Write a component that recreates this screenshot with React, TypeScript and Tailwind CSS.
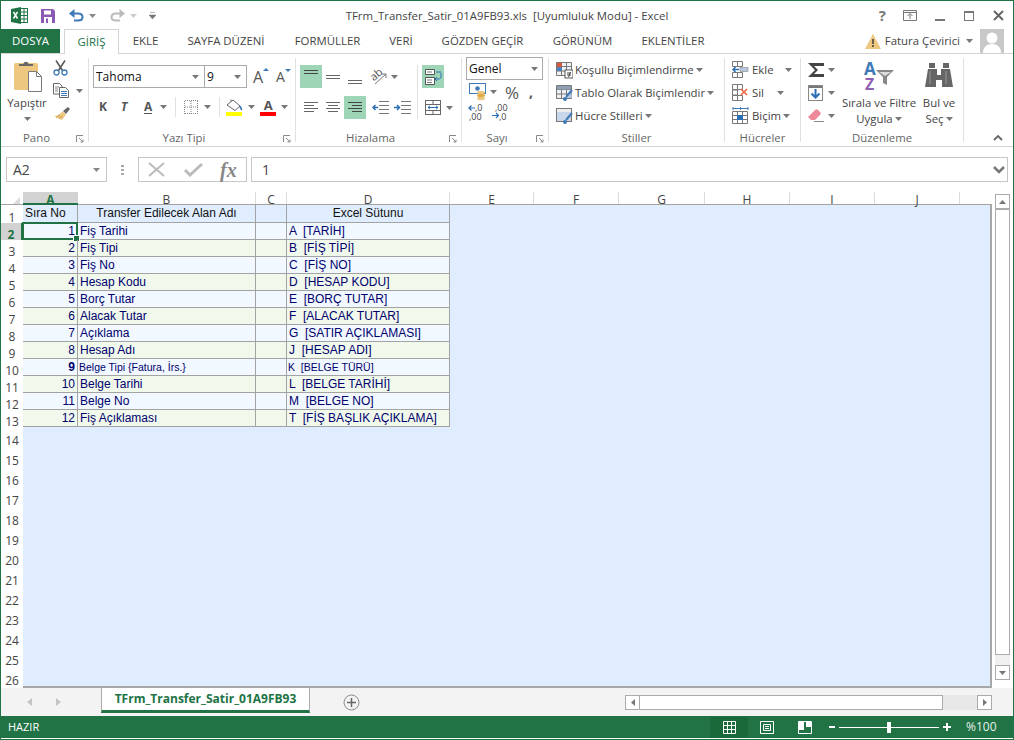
import React from "react";

const Caret = ({ c = "#777", className = "" }: { c?: string; className?: string }) => (
  <svg width="7" height="4" viewBox="0 0 7 4" className={className}><path d="M0 0h7L3.5 4z" fill={c} /></svg>
);

const Launcher = () => (
  <svg width="8" height="8" viewBox="0 0 8 8"><path d="M.5 7V.5H7M3 3l4 4M7 4.5V7H4.5" fill="none" stroke="#8a8a8a" /></svg>
);

function Group({ w, label, launcher, children, sep = true }: { w: string; label: string; launcher?: boolean; children: React.ReactNode; sep?: boolean }) {
  return (
    <div className="flex h-full shrink-0">
      <div className={`${w} h-full flex flex-col`}>
        <div className="h-[77px] shrink-0">{children}</div>
        <div className={`h-[15px] grid ${launcher ? "grid-cols-[1fr_16px]" : "grid-cols-[1fr]"} items-start text-[11.4px] leading-[14px] text-[#666]`}>
          <span className="text-center">{label}</span>
          {launcher && <span className="flex justify-end pr-[4px] pt-[4px]"><Launcher /></span>}
        </div>
      </div>
      {sep && <div className="w-px h-[84px] mt-[4px] bg-[#e1e1e1]" />}
    </div>
  );
}

const Lines = ({ rows, hl }: { rows: [number, number, number][]; hl?: boolean }) => (
  <svg width="16" height="16" viewBox="0 0 16 16">
    {rows.map(([x, w, y], i) => <rect key={i} x={x} y={y} width={w} height="1" fill={hl ? "#444" : "#666"} />)}
  </svg>
);

const Cell = ({ children, hl, w = "w-[22px]" }: { children: React.ReactNode; hl?: boolean; w?: string }) => (
  <div className={`${w} h-[23px] flex items-center justify-center ${hl ? "bg-[#9fd5b7]" : ""}`}>{children}</div>
);

const Paste = () => (
  <svg width="29" height="33" viewBox="0 0 29 33">
    <rect x="0" y="3" width="24" height="27" rx="1.5" fill="#edc77f" />
    <path d="M5 6V4h4.5c0-3 5-3 5 0H19v2z" fill="#666" />
    <path d="M14.500 11.500h8l5 5v15h-13z" fill="#fff" stroke="#7a7a7a" />
    <path d="M22.500 11.500v5h5" fill="none" stroke="#7a7a7a" />
  </svg>
);

const Scissors = () => (
  <svg width="15" height="16" viewBox="0 0 15 16">
    <path d="M3 .5l6.500 10M12 .5L5.500 10.500" stroke="#555" strokeWidth="1.500" fill="none" />
    <circle cx="3.500" cy="12.500" r="2.500" fill="none" stroke="#3e7ab8" strokeWidth="1.300" />
    <circle cx="11.500" cy="12.500" r="2.500" fill="none" stroke="#3e7ab8" strokeWidth="1.300" />
  </svg>
);

const Copy = () => (
  <svg width="16" height="15" viewBox="0 0 16 15">
    <path d="M.5.500h6l2.500 2.500v8H.5z" fill="#fff" stroke="#666" />
    <path d="M6.500 4.500h6l3 3v7h-9z" fill="#fff" stroke="#666" />
    <path d="M2 4h4M2 6h3M2 8h3" stroke="#888" />
    <path d="M8 8.500h6M8 10.500h6M8 12.500h6" stroke="#3e7ab8" />
  </svg>
);

const Brush = () => (
  <svg width="17" height="15" viewBox="0 0 17 15">
    <path d="M10 5l5-4 2 2-4 5z" fill="#666" />
    <path d="M9.500 5.500l3.500 3L9 14 1 10c3 0 5-1 8.500-4.500z" fill="#edc77f" />
    <path d="M3 11.500l4-2.500M6 13l3-3" stroke="#c99a4b" />
  </svg>
);

const BigA = ({ size = 16 }: { size?: number }) => (
  <span className="leading-none text-[#555]" style={{ fontSize: size }}>A</span>
);

const Borders = () => (
  <svg width="14" height="14" viewBox="0 0 14 14">
    <path d="M.5 1v13M13.500 1v13M1 .5h13M1 13.500h13M7 1v13M1 7h13" stroke="#888" strokeDasharray="1 1" fill="none" />
  </svg>
);

const FillBucket = () => (
  <svg width="17" height="18" viewBox="0 0 17 18">
    <path d="M1 7l6-5 7 6-5 4.500z" fill="#fff" stroke="#666" />
    <path d="M5 3.500V1.500" stroke="#666" />
    <path d="M14 8c1.500 1.500 2 3 1.500 4-1-.5-1.500-2-1.500-4z" fill="#3e7ab8" stroke="#3e7ab8" />
    <rect x="0" y="14" width="16" height="4" fill="#ffff00" />
  </svg>
);

const Orient = () => (
  <svg width="17" height="17" viewBox="0 0 17 17" className="overflow-visible">
    <text x="0" y="10" fontSize="11" fill="#555" transform="rotate(-40 6 8)" fontFamily="'Open Sans',sans-serif">ab</text>
    <path d="M4 16L15 6M15 6h-4M15 6v4" stroke="#777" fill="none" />
  </svg>
);

const Indent = ({ rev }: { rev?: boolean }) => (
  <svg width="17" height="13" viewBox="0 0 17 13">
    <path d="M7 .5h10M7 4.500h10M7 8.500h10M7 12.500h10" stroke="#777" />
    {rev ? <path d="M1 6.500h5M3.500 4L1 6.500 3.500 9" stroke="#2a6fb4" strokeWidth="1.500" fill="none" /> : <path d="M0 6.500h5M3 4l2.500 2.500L3 9" stroke="#2a6fb4" strokeWidth="1.500" fill="none" />}
  </svg>
);

const Wrap = () => (
  <svg width="17" height="16" viewBox="0 0 17 16">
    <path d="M.5.500h9v5h-9zM.5 8.500h9v7h-9z" fill="#fff" stroke="#555" />
    <path d="M2 3h5M2 11h5M2 13.500h5" stroke="#777" />
    <path d="M11 3h5M16 4v4c0 1.500-1 2-3 2h-3M12 8l-2 2 2 2" stroke="#2a6fb4" fill="none" />
  </svg>
);

const Merge = () => (
  <svg width="16" height="15" viewBox="0 0 16 15">
    <rect x=".5" y=".5" width="15" height="14" fill="#fff" stroke="#666" />
    <path d="M.5 4.500h15M.5 10.500h15M8 .5v4M8 10.500v4" stroke="#666" />
    <path d="M3 7.500h10M5 5.800L3 7.500l2 1.700M11 5.800l2 1.700-2 1.700" stroke="#2a6fb4" fill="none" />
  </svg>
);

const Accounting = () => (
  <svg width="18" height="18" viewBox="0 0 18 18">
    <rect x=".5" y=".5" width="16" height="10" fill="#fff" stroke="#3e7ab8" />
    <circle cx="8.500" cy="5.500" r="2.300" fill="#3e7ab8" />
    <ellipse cx="12" cy="9.500" rx="4" ry="1.700" fill="#edc77f" />
    <ellipse cx="12" cy="12.500" rx="4" ry="1.700" fill="#e0a840" />
    <ellipse cx="12" cy="15.500" rx="4" ry="1.700" fill="#edc77f" />
  </svg>
);

const Dec = ({ more }: { more?: boolean }) => (
  <svg width="16" height="16" viewBox="0 0 16 16" className="overflow-visible">
    <text x={more ? 3 : 6} y="7" fontSize="9" fill="#444" fontFamily="'Open Sans',sans-serif">{more ? ",00" : ",0"}</text>
    <text x={more ? 7 : 0} y="15.500" fontSize="9" fill="#444" fontFamily="'Open Sans',sans-serif">{more ? ",0" : ",00"}</text>
    {more ? <path d="M0 11.500h6M4 9l2.500 2.500L4 14" stroke="#2a6fb4" strokeWidth="1.200" fill="none" /> : <path d="M0 4h6M2.500 1.500L0 4l2.500 2.500" stroke="#2a6fb4" strokeWidth="1.200" fill="none" />}
  </svg>
);

const TableBase = ({ children }: { children: React.ReactNode }) => (
  <svg width="17" height="18" viewBox="0 0 17 18">
    <path d="M.5 1.500h15v13H.5zM.5 5.500h15M.5 10h15M5.500 1.500v13M10.500 1.500v13" fill="#eef2f7" stroke="#777" />
    {children}
  </svg>
);

const CondFmt = () => (
  <TableBase>
    <rect x="1" y="2" width="5" height="4" fill="#d9573a" />
    <rect x="1" y="6" width="5" height="4" fill="#4a7fc0" />
    <rect x="9" y="9" width="8" height="8" fill="#fff" stroke="#555" />
    <path d="M11 12h4M11 14h4M14.500 11l-2 5" stroke="#444" fill="none" />
  </TableBase>
);

const TableFmt = () => (
  <TableBase>
    <path d="M1 2h14v3.500H1z" fill="#8f9fb5" />
    <path d="M15 6l-6 8h7z" fill="#b7c9e2" />
    <path d="M16 6l-6 7" stroke="#3e7ab8" strokeWidth="2" />
    <circle cx="9" cy="15" r="2" fill="#3e7ab8" />
  </TableBase>
);

const CellStyles = () => (
  <svg width="17" height="18" viewBox="0 0 17 18">
    <rect x=".5" y="1.500" width="15" height="13" fill="#c8d7ea" stroke="#777" />
    <path d="M1 2h14v3H1z" fill="#eee" />
    <path d="M16 6l-6 7" stroke="#3e7ab8" strokeWidth="2" />
    <circle cx="9" cy="15" r="2" fill="#3e7ab8" />
  </svg>
);

const InsCell = () => (
  <svg width="17" height="17" viewBox="0 0 17 17">
    <path d="M.5.500h5v5h-5zM5.500.500h5v5h-5zM.5 11.500h5v5h-5zM5.500 11.500h5v5h-5z" fill="#fff" stroke="#777" />
    <rect x="8" y="6.500" width="8" height="4" fill="#b6c8df" stroke="#777" strokeWidth=".5" />
    <path d="M7 8.500H1M3.500 6L1 8.500 3.500 11" stroke="#2a6fb4" strokeWidth="1.500" fill="none" />
  </svg>
);

const DelCell = () => (
  <svg width="17" height="17" viewBox="0 0 17 17">
    <path d="M.5.500h5v5h-5zM5.500.500h5v5h-5zM.5 6h5v5h-5zM.5 11.500h5v5h-5zM5.500 11.500h5v5h-5z" fill="#fff" stroke="#777" />
    <path d="M9 5l6 6M15 5l-6 6" stroke="#e8663c" strokeWidth="1.600" />
  </svg>
);

const FmtCell = () => (
  <svg width="17" height="18" viewBox="0 0 17 18">
    <path d="M1 1.500h15M1 0v3M8.500 0v3M16 0v3" stroke="#3e7ab8" fill="none" />
    <path d="M.5 4.500h15v12H.5zM.5 8.500h15M.5 12.500h15M5.500 4.500v12M10.500 4.500v12" fill="#fff" stroke="#777" />
    <rect x="5" y="8" width="6" height="5" fill="#2a6fb4" />
  </svg>
);

const Sigma = () => (
  <svg width="16" height="14" viewBox="0 0 16 14"><path d="M16 3V0H0l7 7-7 7h16v-3H6l4-4-4-4z" fill="#444" /></svg>
);

const FillDown = () => (
  <svg width="15" height="16" viewBox="0 0 15 16">
    <rect x=".5" y=".5" width="14" height="15" fill="#fff" stroke="#888" />
    <rect x="1" y="1" width="13" height="2" fill="#777" />
    <path d="M7.500 4v9M3.500 8.500l4 4 4-4" stroke="#2a6fb4" strokeWidth="2" fill="none" />
  </svg>
);

const Eraser = () => (
  <svg width="16" height="13" viewBox="0 0 16 13">
    <path d="M0 8l7-7c1-1 2-1 3 0l2 2c1 1 1 2 0 3l-5 5H3z" fill="#ec8a9a" />
    <path d="M6 12.500h10" stroke="#888" />
  </svg>
);

const SortFilter = () => (
  <svg width="30" height="30" viewBox="0 0 30 30" className="overflow-visible">
    <text x="0" y="14" fontSize="17" fontWeight="700" fill="#3e7ab8" fontFamily="'Open Sans',sans-serif">A</text>
    <text x="1" y="29" fontSize="16" fontWeight="700" fill="#8e5fb3" fontFamily="'Open Sans',sans-serif">Z</text>
    <path d="M12 9h18l-7 7v8l-4-2v-6z" fill="#888" />
    <path d="M15 11h12l-6 4z" fill="#ddd" />
  </svg>
);

const Binoculars = () => (
  <svg width="28" height="24" viewBox="0 0 28 24">
    <path d="M4 0h6v5h-6zM18 0h6v5h-6z" fill="#666" />
    <path d="M3 6h9v6h4V6h9l3 18H17v-7h-6v7H0z" fill="#666" />
    <path d="M5 8v13M21 8v13" stroke="#999" />
  </svg>
);

const ExcelLogo = () => (
  <svg width="17" height="17" viewBox="0 0 17 17">
    <rect x="6" y="1.500" width="10.500" height="14" fill="#fff" stroke="#217346" />
    <path d="M9 1.500v14M13 1.500v14M6 5h10.500M6 8.500h10.500M6 12h10.500" stroke="#217346" />
    <path d="M0 2l10-2v17L0 15z" fill="#217346" />
    <path d="M2.500 5l4 6.500M6.500 5l-4 6.500" stroke="#fff" strokeWidth="1.500" />
  </svg>
);

const Save = () => (
  <svg width="14" height="14" viewBox="0 0 14 14">
    <path d="M0 0h12l2 2v12H0z" fill="#8a5ab5" />
    <rect x="3" y="1.500" width="7" height="4" fill="#fff" />
    <rect x="3" y="8" width="8" height="6" fill="#fff" />
    <rect x="5" y="9.500" width="2" height="4.500" fill="#8a5ab5" />
  </svg>
);

const Undo = ({ c, flip }: { c: string; flip?: boolean }) => (
  <svg width="15" height="13" viewBox="0 0 15 13" style={flip ? { transform: "scaleX(-1)" } : undefined}>
    <path d="M1.500 4.500H9c6 0 6 7 0 7H5" fill="none" stroke={c} strokeWidth="2" />
    <path d="M5.500 0v9L0 4.500z" fill={c} />
  </svg>
);

const COLS = [["A", "w-[55px]"], ["B", "w-[178px]"], ["C", "w-[31px]"], ["D", "w-[163px]"], ["E", "w-[84px]"], ["F", "w-[85px]"], ["G", "w-[86px]"], ["H", "w-[85px]"], ["I", "w-[85px]"], ["J", "w-[85px]"]];

const DATA: [string, string, string, boolean?][] = [
  ["1", "Fiş Tarihi", "A  [TARİH]"],
  ["2", "Fiş Tipi", "B  [FİŞ TİPİ]"],
  ["3", "Fiş No", "C  [FİŞ NO]"],
  ["4", "Hesap Kodu", "D  [HESAP KODU]"],
  ["5", "Borç Tutar", "E  [BORÇ TUTAR]"],
  ["6", "Alacak Tutar", "F  [ALACAK TUTAR]"],
  ["7", "Açıklama", "G  [SATIR AÇIKLAMASI]"],
  ["8", "Hesap Adı", "J  [HESAP ADI]"],
  ["9", "Belge Tipi {Fatura, İrs.}", "K  [BELGE TÜRÜ]", true],
  ["10", "Belge Tarihi", "L  [BELGE TARİHİ]"],
  ["11", "Belge No", "M  [BELGE NO]"],
  ["12", "Fiş Açıklaması", "T  [FİŞ BAŞLIK AÇIKLAMA]"],
];

const TABS: [string, string][] = [["EKLE", "w-[53px]"], ["SAYFA DÜZENİ", "w-[108px]"], ["FORMÜLLER", "w-[95px]"], ["VERİ", "w-[52px]"], ["GÖZDEN GEÇİR", "w-[111px]"], ["GÖRÜNÜM", "w-[89px]"], ["EKLENTİLER", "w-[92px]"]];

const GRID_FONT = "[font-family:'Liberation_Sans',sans-serif] text-[12px] whitespace-pre";
const CELL_B = "border-r border-b border-[#a3a3a3]";

function RowNum({ n, h, lead, sel }: { n: number; h: string; lead: string; sel?: boolean }) {
  return (
    <div className={`${h} flex items-end justify-center text-[12px] ${lead} ${sel ? "bg-[#d2d2d2] text-[#217346] font-bold border-r-2 border-[#217346]" : "text-[#444]"}`}>
      <span className="translate-y-px">{n}</span>
    </div>
  );
}

export default function App() {
  return (
    <div className="w-[1014px] h-[740px] overflow-hidden border border-[#217346] bg-white flex flex-col text-[#444] [font-family:'Open_Sans',sans-serif] text-[11.4px]">
      {/* title bar */}
      <div className="h-[28px] shrink-0 grid grid-cols-[1fr_auto_1fr] items-center">
        <div className="flex items-center pl-[10px] pt-[1px]">
          <ExcelLogo />
          <div className="ml-[13px]"><Save /></div>
          <div className="ml-[14px]"><Undo c="#3e7ab8" /></div>
          <Caret c="#888" className="ml-[5px]" />
          <div className="ml-[14px]"><Undo c="#bbb" flip /></div>
          <Caret c="#ccc" className="ml-[5px]" />
          <svg width="7" height="7" viewBox="0 0 7 7" className="ml-[12px]"><path d="M1 .5h5M0 3h7L3.500 7z" fill="#777" stroke="#777" strokeWidth=".5" /></svg>
        </div>
        <div className="text-[#444] whitespace-pre pt-[2px]">TFrm_Transfer_Satir_01A9FB93.xls  [Uyumluluk Modu] - Excel</div>
        <div className="flex items-center justify-end pr-[9px] pt-[1px]">
          <span className="text-[15px] font-bold text-[#777] leading-none">?</span>
          <svg width="14" height="11" viewBox="0 0 14 11" className="ml-[17px]"><path d="M.5.500h13v10H.5zM.5 2.500h13" fill="none" stroke="#777" /><path d="M7 9V4M4.500 6L7 3.500 9.500 6" fill="none" stroke="#777" /></svg>
          <div className="ml-[18px] mt-[9px] w-[10px] h-[2px] bg-[#777]" />
          <div className="ml-[19px] w-[10px] h-[10px] border border-[#777] border-t-2" />
          <svg width="11" height="11" viewBox="0 0 11 11" className="ml-[19px]"><path d="M1 1l9 9M10 1l-9 9" stroke="#666" strokeWidth="2" /></svg>
        </div>
      </div>

      {/* tabs */}
      <div className="h-[25px] shrink-0 flex items-end border-b border-[#d4d4d4]">
        <div className="w-[59px] h-[24px] bg-[#217346] text-white flex items-center justify-center">DOSYA</div>
        <div className="ml-[4px] w-[55px] h-[25px] -mb-px bg-white border border-b-0 border-[#d4d4d4] text-[#217346] flex items-center justify-center">GİRİŞ</div>
        {TABS.map(([t, w]) => <div key={t} className={`${w} h-[24px] flex items-center justify-center text-[#444] whitespace-nowrap`}>{t}</div>)}
        <div className="flex-1 h-[24px] flex items-center justify-end">
          <svg width="16" height="15" viewBox="0 0 16 15"><path d="M8 0l8 15H0z" fill="#edc77f" /><path d="M8 5v5M8 11v2" stroke="#444" strokeWidth="1.600" /></svg>
          <span className="ml-[4px] text-[#444] whitespace-nowrap">Fatura Çevirici</span>
          <Caret className="ml-[6px]" />
          <div className="ml-[7px] mr-[9px] w-[24px] h-[24px] bg-[#c8c8c8] flex items-end overflow-hidden">
            <svg width="24" height="24" viewBox="0 0 24 24"><circle cx="12" cy="9" r="5.500" fill="#fff" /><path d="M3 24c0-6 4-9 9-9s9 3 9 9z" fill="#fff" /></svg>
          </div>
        </div>
      </div>

      {/* ribbon */}
      <div className="h-[93px] shrink-0 flex border-b border-[#d4d4d4] text-[#444]">
        <Group w="w-[87px]" label="Pano" launcher>
          <div className="flex pl-[3px] pt-[6px]">
            <div className="w-[46px] flex flex-col items-center">
              <div className="ml-[2px]"><Paste /></div>
              <span className="mt-[2px] leading-[16px]">Yapıştır</span>
              <Caret className="mt-[6px]" />
            </div>
            <div className="ml-[3px] flex flex-col">
              <Scissors />
              <div className="flex items-center mt-[7px]"><Copy /><Caret className="ml-[7px]" /></div>
              <div className="mt-[8px]"><Brush /></div>
            </div>
          </div>
        </Group>

        <Group w="w-[206px]" label="Yazı Tipi" launcher>
          <div className="pl-[4px] pt-[11px]">
            <div className="flex items-center">
              <div className="w-[112px] h-[23px] border border-[#ababab] flex items-center justify-between pl-[2px] pr-[5px] text-[#111] text-[12px]">Tahoma<Caret /></div>
              <div className="w-[43px] h-[23px] -ml-px border border-[#ababab] flex items-center justify-between pl-[2px] pr-[5px] text-[#111] text-[12px]">9<Caret /></div>
              <div className="ml-[6px] w-[23px] relative flex"><BigA size={16} /><svg width="6" height="3" className="absolute -top-[1px] left-[10px]"><path d="M0 3l3-3 3 3z" fill="#3e7ab8" /></svg></div>
              <div className="relative flex"><BigA size={14} /><svg width="6" height="3" className="absolute -top-[1px] left-[9px]"><path d="M0 0l3 3 3-3z" fill="#3e7ab8" /></svg></div>
            </div>
            <div className="flex items-center mt-[9px] h-[20px] text-[#555]">
              <span className="ml-[6px] w-[16px] font-bold text-[12px]">K</span>
              <span className="ml-[6px] w-[16px] italic font-bold text-[12px]">T</span>
              <span className="ml-[7px] font-bold text-[12px] border-b border-[#555] leading-[13px]">A</span>
              <Caret className="ml-[8px]" />
              <div className="ml-[8px] w-px h-[20px] bg-[#e1e1e1]" />
              <div className="ml-[8px]"><Borders /></div>
              <Caret className="ml-[6px]" />
              <div className="ml-[8px] w-px h-[20px] bg-[#e1e1e1]" />
              <div className="ml-[6px]"><FillBucket /></div>
              <Caret className="ml-[5px]" />
              <div className="ml-[5px] flex flex-col items-center w-[16px]"><span className="font-bold text-[13px] leading-[13px] text-[#555]">A</span><div className="w-[16px] h-[4px] bg-[#ff0000]" /></div>
              <Caret className="ml-[5px]" />
            </div>
          </div>
        </Group>

        <Group w="w-[165px]" label="Hizalama" launcher>
          <div className="flex pt-[11px] pl-[4px]">
            <div className="w-[117px] flex flex-col gap-[8px]">
              <div className="flex">
                <Cell hl><Lines hl rows={[[1, 14, 1], [1, 14, 4]]} /></Cell>
                <Cell><Lines rows={[[1, 14, 6], [1, 14, 9]]} /></Cell>
                <Cell><Lines rows={[[1, 14, 11], [1, 14, 14]]} /></Cell>
                <div className="ml-[5px] flex items-center"><Orient /><Caret className="ml-[3px]" /></div>
              </div>
              <div className="flex">
                <Cell><Lines rows={[[1, 14, 2], [1, 10, 5], [1, 14, 8], [1, 10, 11]]} /></Cell>
                <Cell><Lines rows={[[1, 14, 2], [3, 10, 5], [1, 14, 8], [3, 10, 11]]} /></Cell>
                <Cell hl><Lines hl rows={[[1, 14, 2], [5, 10, 5], [1, 14, 8], [5, 10, 11]]} /></Cell>
                <div className="ml-[6px] flex items-center"><Indent rev /><div className="ml-[5px]"><Indent /></div></div>
              </div>
            </div>
            <div className="w-px h-[54px] bg-[#e1e1e1]" />
            <div className="ml-[4px] flex flex-col gap-[8px]">
              <Cell hl><Wrap /></Cell>
              <div className="flex items-center h-[23px] pl-[3px]"><Merge /><Caret className="ml-[5px]" /></div>
            </div>
          </div>
        </Group>

        <Group w="w-[86px]" label="Sayı" launcher>
          <div className="pl-[4px] pt-[3px]">
            <div className="w-[77px] h-[23px] border border-[#ababab] flex items-center justify-between pl-[2px] pr-[4px] text-[#111] text-[12px]">Genel<Caret /></div>
            <div className="flex items-center mt-[2px] h-[20px] pl-[3px]">
              <Accounting />
              <Caret className="ml-[3px]" />
              <span className="ml-[8px] text-[17px] leading-none text-[#555]">%</span>
              <span className="ml-[10px] font-bold text-[14px] leading-none text-[#555]">,</span>
            </div>
            <div className="flex items-center mt-[2px] pl-[3px]"><Dec /><div className="ml-[7px]"><Dec more /></div></div>
          </div>
        </Group>

        <Group w="w-[175px]" label="Stiller">
          <div className="pl-[7px] pt-[4px]">
            <div className="h-[23px] flex items-center"><CondFmt /><span className="ml-[2px]">Koşullu Biçimlendirme</span><Caret className="ml-[2px]" /></div>
            <div className="h-[23px] flex items-center"><TableFmt /><span className="ml-[2px]">Tablo Olarak Biçimlendir</span><Caret className="ml-[2px]" /></div>
            <div className="h-[23px] flex items-center"><CellStyles /><span className="ml-[2px]">Hücre Stilleri</span><Caret className="ml-[2px]" /></div>
          </div>
        </Group>

        <Group w="w-[75px]" label="Hücreler">
          <div className="pl-[7px] pt-[4px]">
            <div className="h-[23px] flex items-center"><InsCell /><span className="ml-[3px]">Ekle</span><Caret className="ml-[11px]" /></div>
            <div className="h-[23px] flex items-center"><DelCell /><span className="ml-[3px]">Sil</span><Caret className="ml-[13px]" /></div>
            <div className="h-[23px] flex items-center"><FmtCell /><span className="ml-[3px]">Biçim</span><Caret className="ml-[2px]" /></div>
          </div>
        </Group>

        <Group w="w-[162px]" label="Düzenleme">
          <div className="flex pt-[4px] pl-[7px]">
            <div className="w-[34px]">
              <div className="h-[23px] flex items-center"><Sigma /><Caret className="ml-[4px]" /></div>
              <div className="h-[23px] flex items-center"><FillDown /><Caret className="ml-[5px]" /></div>
              <div className="h-[23px] flex items-center"><Eraser /><Caret className="ml-[4px]" /></div>
            </div>
            <div className="w-[74px] flex flex-col items-center whitespace-nowrap">
              <div className="mt-[3px] h-[31px]"><SortFilter /></div>
              <span className="mt-[3px] leading-[16px]">Sırala ve Filtre</span>
              <span className="leading-[16px] flex items-center">Uygula<Caret className="ml-[2px]" /></span>
            </div>
            <div className="ml-[6px] w-[34px] flex flex-col items-center whitespace-nowrap">
              <div className="mt-[5px] h-[29px]"><Binoculars /></div>
              <span className="mt-[3px] leading-[16px]">Bul ve</span>
              <span className="leading-[16px] flex items-center">Seç<Caret className="ml-[2px]" /></span>
            </div>
          </div>
        </Group>

        <div className="flex-1 flex items-end justify-end pr-[10px] pb-[5px]">
          <svg width="10" height="6" viewBox="0 0 10 6"><path d="M1 5l4-4 4 4" fill="none" stroke="#666" strokeWidth="1.800" /></svg>
        </div>
      </div>

      {/* formula bar */}
      <div className="h-[25px] mt-[10px] shrink-0 flex items-stretch pl-[5px] pr-[5px]">
        <div className="w-[101px] border border-[#c6c6c6] flex items-center justify-between pl-[6px] pr-[6px] text-[14px] text-[#444]">A2<Caret c="#888" /></div>
        <div className="w-[31px] flex items-center justify-center">
          <svg width="3" height="10" viewBox="0 0 3 10"><path d="M0 0h3v2H0zM0 4h3v2H0zM0 8h3v2H0z" fill="#aaa" /></svg>
        </div>
        <div className="w-[109px] border border-[#c6c6c6] flex items-center pl-[9px]">
          <svg width="17" height="15" viewBox="0 0 17 15"><path d="M1 1l15 13M16 1L1 14" stroke="#bbb" strokeWidth="2" /></svg>
          <svg width="19" height="15" viewBox="0 0 19 15" className="ml-[19px]"><path d="M1 8l5 5L18 2" fill="none" stroke="#bbb" strokeWidth="3" /></svg>
          <span className="ml-[17px] [font-family:'Liberation_Serif',serif] italic font-bold text-[20px] leading-none text-[#888]">fx</span>
        </div>
        <div className="ml-[4px] flex-1 border border-[#c6c6c6] flex items-center justify-between pl-[10px] pr-[2px] text-[14px] text-[#444]">
          1
          <svg width="12" height="8" viewBox="0 0 12 8"><path d="M1 1l5 5 5-5" fill="none" stroke="#777" strokeWidth="2.500" /></svg>
        </div>
      </div>

      {/* sheet + scrollbar */}
      <div className="h-[496px] mt-[10px] shrink-0 flex">
        <div className="w-[991px] flex flex-col">
          <div className="h-[13px] shrink-0 flex text-[12px] leading-[14px] text-[#444] border-b border-[#a3a3a3]">
            <div className="w-[22px] flex items-end justify-end pr-[3px]">
              <svg width="7" height="7" viewBox="0 0 7 7"><path d="M7 0v7H0z" fill="#dcdcdc" /></svg>
            </div>
            {COLS.map(([c, w], i) => (
              <div key={c} className={`${w} flex justify-center ${i === 0 ? "bg-[#d2d2d2] text-[#217346] font-bold border-b-2 border-[#217346] h-[13px]" : "border-r border-[#dcdcdc]"}`}>
                <span className="translate-y-px">{c}</span>
              </div>
            ))}
          </div>
          <div className="flex-1 flex min-h-0">
            <div className="w-[22px] shrink-0 flex flex-col">
              <RowNum n={1} h="h-[18px]" lead="leading-[12px]" />
              {DATA.map((_, i) => <RowNum key={i} n={i + 2} h="h-[17px]" lead="leading-[12px]" sel={i === 0} />)}
              {Array.from({ length: 13 }, (_, i) => <RowNum key={i} n={i + 14} h="h-[20px]" lead="leading-[14px]" />)}
            </div>
            <div className="flex-1 bg-[#e0edfe] border-r-2 border-b-2 border-[#a8a8a8] min-w-0">
              <div className={`w-[427px] ${GRID_FONT}`}>
                <div className="h-[18px] grid grid-cols-[55px_178px_31px_163px] text-[#111] leading-[16px]">
                  <div className={`${CELL_B} pl-[2px] overflow-hidden`}>Sıra No</div>
                  <div className={`${CELL_B} text-center`}>Transfer Edilecek Alan Adı</div>
                  <div className={CELL_B} />
                  <div className={`${CELL_B} text-center`}>Excel Sütunu</div>
                </div>
                {DATA.map(([n, name, col, small], i) => (
                  <div key={n} className={`h-[17px] grid grid-cols-[55px_178px_31px_163px] leading-[16px] text-[#00006e] ${i % 2 === 0 ? "bg-[#f1f8ff]" : "bg-[#f1f9ec]"}`}>
                    <div className={`${CELL_B} relative text-right pr-[2px] ${small ? "font-bold" : ""}`}>
                      {n}
                      {i === 0 && (
                        <>
                          <div className="absolute -left-px -top-px w-[56px] h-[18px] border-2 border-[#217346]" />
                          <div className="absolute -right-[3px] -bottom-[3px] w-[5px] h-[5px] bg-[#217346] border border-white box-content" />
                        </>
                      )}
                    </div>
                    <div className={`${CELL_B} ${small ? "text-[10.500px] pl-px" : "pl-[2px]"}`}>{name}</div>
                    <div className={CELL_B} />
                    <div className={`${CELL_B} ${small ? "text-[10.500px] pl-px" : "pl-[2px]"}`}>{col}</div>
                  </div>
                ))}
              </div>
            </div>
          </div>
        </div>
        <div className="ml-[3px] w-[15px] flex flex-col bg-[#f0f0f0] mt-[2px]">
          <div className="h-[15px] shrink-0 bg-white border border-[#ababab] flex items-center justify-center"><svg width="7" height="4"><path d="M0 4h7L3.500 0z" fill="#777" /></svg></div>
          <div className="h-[446px] shrink-0 bg-white border border-[#ababab]" />
          <div className="flex-1" />
          <div className="h-[15px] shrink-0 bg-white border border-[#ababab] flex items-center justify-center"><Caret /></div>
          <div className="h-[8px] shrink-0 bg-white" />
        </div>
      </div>

      {/* sheet tabs */}
      <div className="h-[28px] shrink-0 bg-[#f3f3f3] flex items-start">
        <div className="w-[100px] h-[28px] flex items-center pl-[26px]">
          <svg width="5" height="8"><path d="M5 0v8L0 4z" fill="#c4c4c4" /></svg>
          <svg width="5" height="8" className="ml-[24px]"><path d="M0 0v8l5-4z" fill="#c4c4c4" /></svg>
        </div>
        <div className="w-[209px] h-[25px] bg-white border-x border-[#ababab] border-b-[3px] border-b-[#217346] flex items-center justify-center text-[12px] font-bold text-[#217346] whitespace-nowrap">TFrm_Transfer_Satir_01A9FB93</div>
        <div className="w-[315px] h-[28px] flex items-center pl-[33px]">
          <svg width="17" height="17" viewBox="0 0 17 17"><circle cx="8.500" cy="8.500" r="7.500" fill="none" stroke="#888" /><path d="M4 8.500h9M8.500 4v9" stroke="#666" strokeWidth="1.500" /></svg>
        </div>
        <div className="mt-[7px] w-[367px] h-[15px] flex">
          <div className="w-[15px] bg-white border border-[#ababab] flex items-center justify-center"><svg width="4" height="7"><path d="M4 0v7L0 3.500z" fill="#777" /></svg></div>
          <div className="w-[303px] bg-white border-y border-r border-[#ababab]" />
          <div className="flex-1 bg-[#e8e8e8]" />
          <div className="w-[15px] bg-white border border-[#ababab] flex items-center justify-center"><svg width="4" height="7"><path d="M0 0v7l4-3.500z" fill="#777" /></svg></div>
        </div>
      </div>

      {/* status bar */}
      <div className="h-[22px] shrink-0 bg-[#217346] text-white flex items-center text-[11px]">
        <span className="pl-[7px] w-[709px]">HAZIR</span>
        <div className="w-[38px] h-[21px] bg-[#19693a] flex items-center justify-center">
          <svg width="13" height="13" viewBox="0 0 13 13"><path d="M.5.500h12v12H.5zM4.500.500v12M8.500.500v12M.5 4.500h12M.5 8.500h12" fill="none" stroke="#fff" /></svg>
        </div>
        <div className="w-[38px] flex justify-center">
          <svg width="14" height="13" viewBox="0 0 14 13"><path d="M.5.500h13v12H.5z" fill="none" stroke="#fff" /><path d="M3.500 3.500h7v6h-7zM5 5.500h4M5 7.500h4" fill="none" stroke="#fff" /></svg>
        </div>
        <div className="w-[38px] flex justify-center">
          <svg width="14" height="13" viewBox="0 0 14 13"><path d="M.5.500h13v12H.5z" fill="none" stroke="#fff" /><path d="M1 1h5v8H1zM8 1h5v5H8z" fill="#fff" /></svg>
        </div>
        <div className="ml-[5px] flex items-center">
          <div className="w-[6px] h-[2px] bg-white" />
          <div className="mx-[4px] w-[100px] h-[1px] bg-white flex justify-center items-center">
            <div className="w-[4px] h-[11px] bg-white" />
          </div>
          <svg width="8" height="8" viewBox="0 0 8 8"><path d="M0 4h8M4 0v8" stroke="#fff" strokeWidth="2" /></svg>
        </div>
        <span className="ml-[15px] text-[12px] text-[#e8f0ea]">%100</span>
      </div>
    </div>
  );
}
